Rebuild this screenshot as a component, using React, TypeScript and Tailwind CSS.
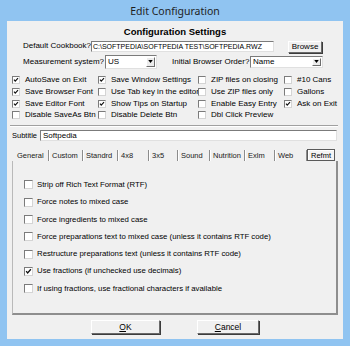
import React from "react";

const SANS = "font-['Liberation_Sans',Arial,sans-serif]";

const TOP: [string, boolean][] = [
  ["AutoSave on Exit", true],
  ["Save Window Settings", true],
  ["ZIP files on closing", false],
  ["#10 Cans", false],
  ["Save Browser Font", true],
  ["Use Tab key in the editor", false],
  ["Use ZIP files only", false],
  ["Gallons", false],
  ["Save Editor Font", true],
  ["Show Tips on Startup", true],
  ["Enable Easy Entry", false],
  ["Ask on Exit", true],
  ["Disable SaveAs Btn", false],
  ["Disable Delete Btn", false],
  ["Dbl Click Preview", false],
];

const TABS: [string, string][] = [
  ["General", "w-[35px]"],
  ["Custom", "w-[34px]"],
  ["Standrd", "w-[35px]"],
  ["4x8", "w-[31px]"],
  ["3x5", "w-[29px]"],
  ["Sound", "w-[32px]"],
  ["Nutrition", "w-[35px]"],
  ["Exlm", "w-[30px]"],
  ["Web", "w-[32px]"],
];

const OPTIONS: [string, boolean][] = [
  ["Strip off Rich Text Format (RTF)", false],
  ["Force notes to mixed case", false],
  ["Force ingredients to mixed case", false],
  ["Force preparations text to mixed case (unless it contains RTF code)", false],
  ["Restructure preparations text (unless it contains RTF code)", false],
  ["Use fractions (if unchecked use decimals)", true],
  ["If using fractions, use fractional characters if available", false],
];

// small sunken checkbox
function Check({ on, big }: { on?: boolean; big?: boolean }) {
  return (
    <span
      className={`${big ? "h-[9px] w-[9px]" : "h-[8px] w-[8px]"} flex shrink-0 border border-t-[#7b7b7b] border-l-[#7b7b7b] border-r-[#d4d4d4] border-b-[#d4d4d4] bg-white`}
    >
      {on && (
        <svg viewBox="0 0 8 8" className="h-full w-full">
          <path d="M1.3 3.6 L3 5.6 L6.7 1.5" fill="none" stroke="#111" strokeWidth="1.5" />
        </svg>
      )}
    </span>
  );
}

function Select({ value, w }: { value: string; w: string }) {
  return (
    <div className={`flex ${w} h-full border border-t-[#7b7b7b] border-l-[#7b7b7b] border-r-[#e0e0e0] border-b-[#e0e0e0] bg-white`}>
      <span className="flex flex-1 items-center pl-[2px] text-[8px] leading-none text-black">{value}</span>
      <span className="m-[1px] flex w-[9px] items-center justify-center border border-t-white border-l-white border-r-[#6e6e6e] border-b-[#6e6e6e] bg-[#ececec]">
        <svg viewBox="0 0 6 4" className="h-[3px] w-[5px]">
          <path d="M0 0 H6 L3 4 Z" fill="#000" />
        </svg>
      </span>
    </div>
  );
}

function Button({ children, w, h }: { children: React.ReactNode; w: string; h: string }) {
  return (
    <div
      className={`flex ${w} ${h} items-center justify-center border border-t-white border-l-white border-r-[#6a6a6a] border-b-[#6a6a6a] bg-[#f0f0f0] shadow-[1px_1px_0_#3c3c3c] text-black`}
    >
      {children}
    </div>
  );
}

export default function App() {
  return (
    <div className={`flex h-[346px] w-[350px] flex-col bg-[#90c4f1] ${SANS}`}>
      {/* title bar */}
      <div className="flex h-[21px] items-center justify-center pt-[2px] font-['Noto_Sans',sans-serif] text-[10.5px] text-[#1e1e1e]">
        Edit Configuration
      </div>

      {/* client area */}
      <div className="mx-[7px] mb-[7px] flex flex-1 flex-col bg-[#f0f0f0] pt-[5px] text-black">
        <div className="flex h-[12px] items-center justify-center text-[9.5px] font-bold leading-none">
          Configuration Settings
        </div>

        {/* cookbook row */}
        <div className="mt-[2.5px] flex h-[12.5px] items-start">
          <span className="flex h-[11px] w-[84px] items-center justify-end whitespace-nowrap text-[8px] leading-none">
            Default Cookbook?
          </span>
          <div className="flex h-[11px] w-[183px] items-center border border-t-[#7b7b7b] border-l-[#7b7b7b] border-r-[#e0e0e0] border-b-[#e0e0e0] bg-white pl-[1px] text-[7px] leading-none whitespace-nowrap">
            C:\SOFTPEDIA\SOFTPEDIA TEST\SOFTPEDIA.RWZ
          </div>
          <div className="ml-[14px]">
            <Button w="w-[34px]" h="h-[12px]">
              <span className="text-[8px] leading-none">Browse</span>
            </Button>
          </div>
        </div>

        {/* measurement row */}
        <div className="mt-[1.5px] flex h-[14px] items-center">
          <span className="w-[97px] whitespace-nowrap text-right text-[8px] leading-none">Measurement system?</span>
          <div className="ml-[1px] h-[14px]">
            <Select value="US" w="w-[52px]" />
          </div>
          <span className="ml-[15px] w-[78px] whitespace-nowrap text-[8px] leading-none">Initial Browser Order?</span>
          <div className="h-[12px]">
            <Select value="Name" w="w-[73px]" />
          </div>
        </div>

        {/* general check boxes */}
        <div className="mt-[6px] grid grid-cols-[86px_100px_86px_1fr] pl-[5px]">
          {TOP.map(([label, on]) => (
            <div key={label} className="flex h-[11.7px] items-center gap-[5px] whitespace-nowrap text-[8px] leading-none">
              <Check on={on} />
              <span>{label}</span>
            </div>
          ))}
        </div>

        {/* etched separator */}
        <div className="mx-[3px] mt-[4px] h-[2px] w-[328px] border-t border-b border-t-[#a0a0a0] border-b-white" />

        {/* subtitle */}
        <div className="mt-[3px] flex h-[11px] items-center pl-[5px]">
          <span className="w-[28px] text-[7.5px] leading-none">Subtitle</span>
          <div className="flex h-[11px] w-[297px] items-center border border-t-[#7b7b7b] border-l-[#7b7b7b] border-r-[#e0e0e0] border-b-[#e0e0e0] bg-white pl-[2px] text-[8px] leading-none">
            Softpedia
          </div>
        </div>

        {/* tab strip */}
        <div className="mt-[8px] flex h-[12px] items-end pl-[7px]">
          {TABS.map(([t, w]) => (
            <div
              key={t}
              className={`flex ${w} h-[11px] items-center border-r border-r-[#8c8c8c] pl-[3px] text-[7.5px] leading-none text-[#202020] shadow-[1px_0_0_#ffffff]`}
            >
              {t}
            </div>
          ))}
          <div className="flex h-[12px] w-[28px] items-center justify-center border border-[#5a5a5a] bg-[#f4f4f4] text-[7.5px] leading-none shadow-[inset_1px_1px_0_#ffffff]">
            Refmt
          </div>
        </div>

        {/* tab panel */}
        <div className="ml-[5px] flex h-[154px] w-[326px] flex-col border-l border-l-[#b9b9b9] border-r-2 border-r-[#8e8e8e] border-b-2 border-b-[#8e8e8e] pt-[15px] pl-[11px]">
          {OPTIONS.map(([label, on]) => (
            <div key={label} className="flex h-[17.3px] items-center gap-[4px] whitespace-nowrap text-[7.8px] leading-none">
              <Check on={on} big />
              <span>{label}</span>
            </div>
          ))}
        </div>

        {/* buttons */}
        <div className="mt-[5px] flex pl-[84px]">
          <Button w="w-[69px]" h="h-[14px]">
            <span className="text-[8.5px] leading-none">
              <span className="underline">O</span>K
            </span>
          </Button>
          <div className="ml-[37px]">
            <Button w="w-[62px]" h="h-[14px]">
              <span className="text-[8.5px] leading-none">
                <span className="underline">C</span>ancel
              </span>
            </Button>
          </div>
        </div>
      </div>
    </div>
  );
}
